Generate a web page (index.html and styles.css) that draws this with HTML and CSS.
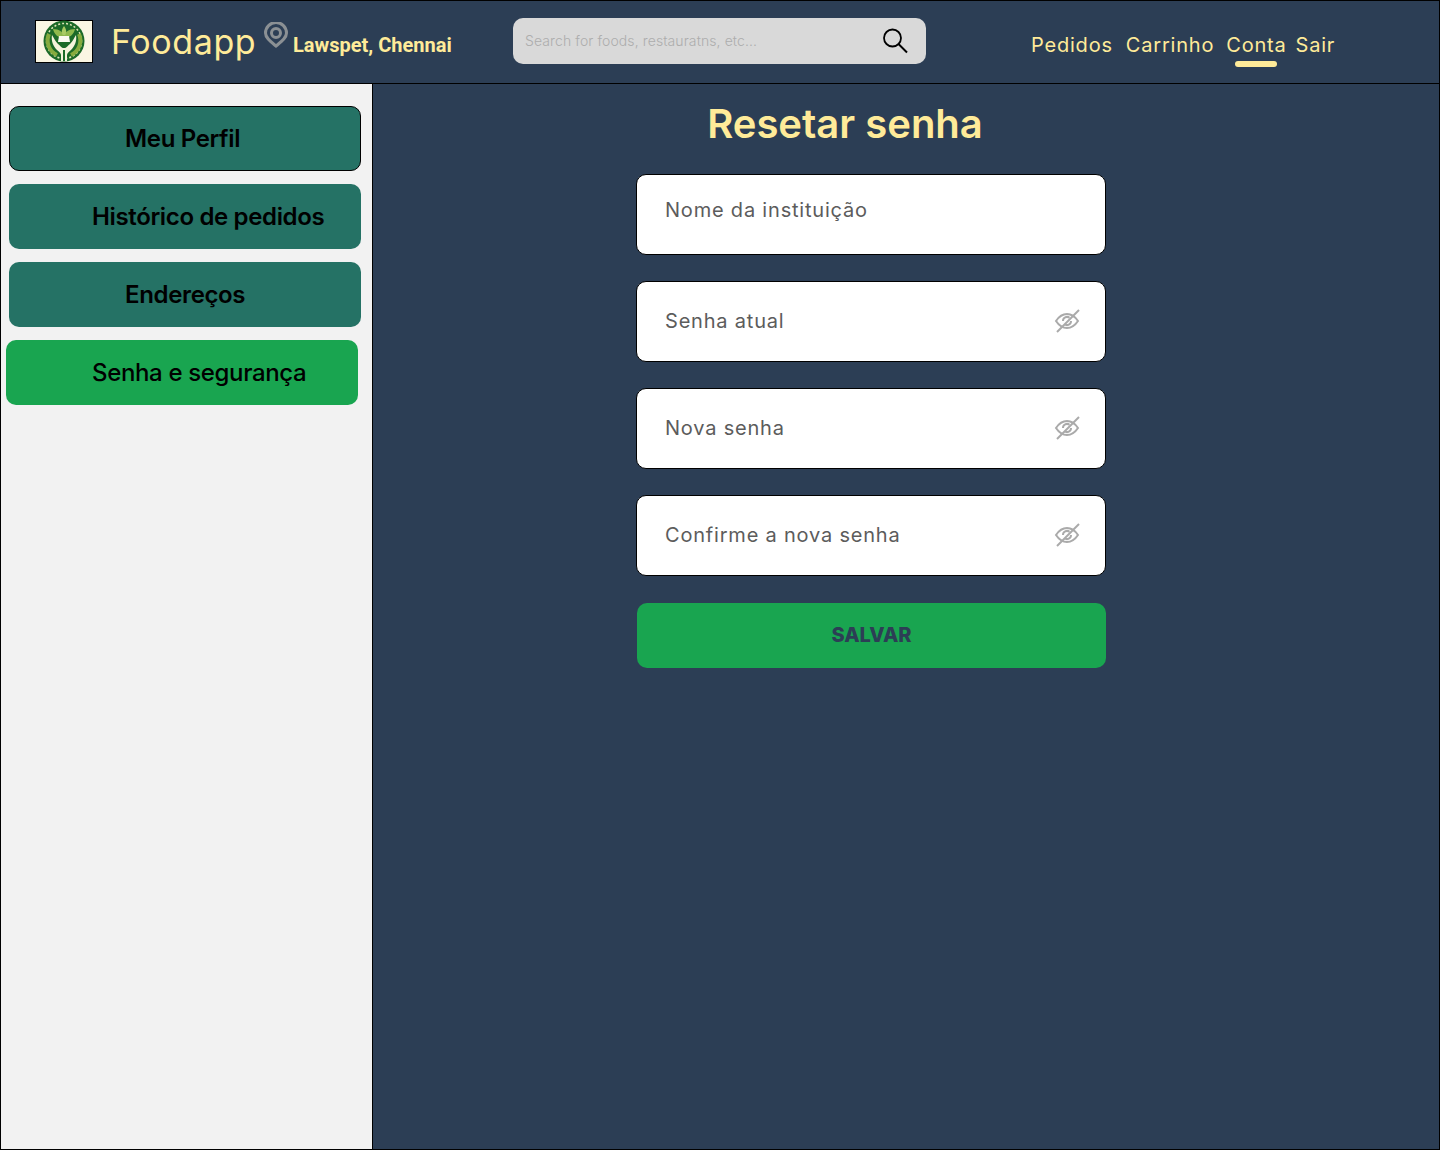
FILE: index.html
```html
<!DOCTYPE html>
<html lang="pt">

<head>
  <meta charset="utf-8">
  <title>Foodapp</title>
  <link rel="stylesheet" href="styles.css">
</head>

<body>
  <div class="page">
    <header class="topbar">
      <div class="logo">
        <svg width="42" height="42" viewBox="0 0 42 42">
          <circle cx="21" cy="21" r="20.500" fill="#1c6a28" />
          <circle cx="21" cy="21" r="17.500" fill="none" stroke="#dfe6b8" stroke-width="1.500" stroke-dasharray="2 2" />
          <path d="M6 14A16 16 0 0 0 14 35M36 14A16 16 0 0 1 28 35" fill="none" stroke="#86ab3e" stroke-width="4" />
          <path d="M21 18C15 18 11 14 10 9c6 0 11 3 11 9zM21 18c6 0 10-4 11-9-6 0-11 3-11 9z" fill="#8fb94c" />
          <path d="M21 16c-3-2-3-6 0-10 3 4 3 8 0 10z" fill="#a9cb63" />
          <path d="M16 16h10l1 6H15z" fill="#fbfaf0" />
          <path d="M9 15c-1 6 1 11 5 15 2 2 4 3 4 5v6h6v-6c0-2 2-3 4-5 4-4 6-9 5-15-2 3-3 6-6 9-3 2-3 4-6 4s-3-2-6-4c-3-3-4-6-6-9z" fill="#f5f3dc" />
          <path d="M20 30h2v11h-2z" fill="#1c6a28" />
        </svg>
      </div>
      <span class="brand">Foodapp</span>
      <svg class="pin" width="24" height="26" viewBox="0 0 24 26">
        <path d="M12 24C6.500 19.500 1.500 16 1.500 11a10.500 10.500 0 0 1 21 0c0 5-5 8.500-10.500 13z" fill="none" stroke="#8b9094" stroke-width="3" />
        <circle cx="12" cy="11" r="4.500" fill="none" stroke="#8b9094" stroke-width="3" />
      </svg>
      <span class="city">Lawspet, Chennai</span>
      <div class="search">
        <span class="search-text">Search for foods, restauratns, etc...</span>
        <svg width="28" height="28" viewBox="0 0 28 28">
          <circle cx="11.500" cy="11" r="8.500" fill="none" stroke="#000" stroke-width="1.800" />
          <path d="M17.500 17l8.500 8.500" stroke="#000" stroke-width="2" />
        </svg>
      </div>
      <nav class="menu">
        <a>Pedidos</a>
        <a>Carrinho</a>
        <a class="active">Conta</a>
        <a class="last">Sair</a>
      </nav>
    </header>

    <div class="content">
      <aside class="sidebar">
        <a class="side-item short outlined">Meu Perfil</a>
        <a class="side-item">Histórico de pedidos</a>
        <a class="side-item short">Endereços</a>
        <a class="side-item current">Senha e segurança</a>
      </aside>

      <main class="main">
        <h1 class="title">Resetar senha</h1>
        <form class="form">
          <div class="field field-top"><span>Nome da instituição</span></div>
          <div class="field"><span>Senha atual</span>
            <svg class="eye" width="26" height="24" viewBox="0 0 26 24">
              <path d="M2 12c3-4.500 7-7 11-7s8 2.500 11 7c-3 4.500-7 7-11 7s-8-2.500-11-7z" fill="none" stroke="#aaa" stroke-width="2" />
              <path d="M9 12a4 4 0 0 1 6.500-3.200M17 12a4 4 0 0 1-6.500 3.200" fill="none" stroke="#aaa" stroke-width="2" />
              <path d="M3 23L25 1" stroke="#aaa" stroke-width="2" />
            </svg>
          </div>
          <div class="field"><span>Nova senha</span>
            <svg class="eye" width="26" height="24" viewBox="0 0 26 24">
              <path d="M2 12c3-4.500 7-7 11-7s8 2.500 11 7c-3 4.500-7 7-11 7s-8-2.500-11-7z" fill="none" stroke="#aaa" stroke-width="2" />
              <path d="M9 12a4 4 0 0 1 6.500-3.200M17 12a4 4 0 0 1-6.500 3.200" fill="none" stroke="#aaa" stroke-width="2" />
              <path d="M3 23L25 1" stroke="#aaa" stroke-width="2" />
            </svg>
          </div>
          <div class="field"><span>Confirme a nova senha</span>
            <svg class="eye" width="26" height="24" viewBox="0 0 26 24">
              <path d="M2 12c3-4.500 7-7 11-7s8 2.500 11 7c-3 4.500-7 7-11 7s-8-2.500-11-7z" fill="none" stroke="#aaa" stroke-width="2" />
              <path d="M9 12a4 4 0 0 1 6.500-3.200M17 12a4 4 0 0 1-6.500 3.200" fill="none" stroke="#aaa" stroke-width="2" />
              <path d="M3 23L25 1" stroke="#aaa" stroke-width="2" />
            </svg>
          </div>
          <div class="save">SALVAR</div>
        </form>
      </main>
    </div>
  </div>
</body>

</html>
```

FILE: styles.css
```css
* {
  box-sizing: border-box;
}

body {
  margin: 0;
  font-family: "Inter", sans-serif;
  background-color: #2c3e55;
}

.page {
  display: flex;
  flex-direction: column;
  height: 1150px;
  border: 1px solid #000;
  background-color: #2c3e55;
}

/* top bar */
.topbar {
  display: flex;
  align-items: center;
  height: 83px;
  padding-left: 34px;
  border-bottom: 1px solid #000;
  color: #ffeb99;
  flex-shrink: 0;
}

.logo {
  display: flex;
  align-items: flex-end;
  justify-content: center;
  width: 58px;
  height: 43px;
  margin-top: -1px;
  background-color: #faf6e3;
  border: 1px solid #000;
}

.brand {
  margin-left: 18px;
  width: 153px;
  font-family: "Inter", sans-serif;
  font-size: 34px;
  line-height: 40px;
  letter-spacing: 0.6px;
}

.pin {
  align-self: flex-start;
  margin-top: 21px;
}

.city {
  margin-left: 5px;
  margin-top: 6px;
  width: 220px;
  font-family: "Roboto", sans-serif;
  font-size: 20px;
  font-weight: 700;
}

.search {
  display: flex;
  align-items: center;
  justify-content: space-between;
  width: 413px;
  height: 46px;
  padding: 0 17px 0 12px;
  margin-top: -3px;
  background-color: #d9d9d9;
  border-radius: 10px;
}

.search-text {
  font-family: "Inter", sans-serif;
  font-size: 14px;
  font-weight: 300;
  letter-spacing: 0.1px;
  color: #adadad;
}

.menu {
  display: flex;
  margin-left: 105px;
  margin-top: 5px;
  gap: 13px;
  font-family: "Inter", sans-serif;
  font-size: 20px;
  line-height: 28px;
  letter-spacing: 0.8px;
}

.menu a {
  position: relative;
}

.menu .active {
  margin-left: -1px;
}

.menu .last {
  margin-left: -4px;
}

.menu .active::after {
  content: "";
  position: absolute;
  left: 9px;
  top: 30px;
  width: 42px;
  height: 6px;
  background-color: #ffeb99;
  border-radius: 3px;
}

/* sidebar + main */
.content {
  display: flex;
  flex: 1;
}

.sidebar {
  display: flex;
  flex-direction: column;
  gap: 13px;
  width: 372px;
  padding: 22px 0 0 8px;
  background-color: #f2f2f2;
  border-right: 1px solid #000;
}

.side-item {
  display: flex;
  align-items: center;
  width: 352px;
  height: 65px;
  padding-left: 83px;
  background-color: #257265;
  border-radius: 10px;
  color: #000;
  font-size: 24px;
  font-weight: 600;
  letter-spacing: -0.35px;
}

.short {
  padding-left: 116px;
}

.outlined {
  border: 1px solid #000;
  padding-left: 115px;
}

.current {
  margin-left: -3px;
  padding-left: 86px;
  background-color: #19a550;
  font-weight: 500;
}

.main {
  flex: 1;
}

.title {
  width: 944px;
  margin: 15px 0 0;
  font-size: 40px;
  line-height: 50px;
  font-weight: 600;
  text-align: center;
  color: #ffeb99;
}

.form {
  display: flex;
  flex-direction: column;
  gap: 26.5px;
  width: 469px;
  margin: 25px 0 0 264px;
}

.field {
  display: flex;
  align-items: center;
  justify-content: space-between;
  width: 470px;
  height: 80.5px;
  margin-left: -1px;
  padding: 0 25px 0 28px;
  background-color: #fff;
  border: 1px solid #000;
  border-radius: 10px;
  font-size: 20px;
  letter-spacing: 0.8px;
  color: #5c5c5c;
}

.field-top {
  padding-bottom: 9px;
}

.save {
  height: 65px;
  margin: 1px 0 0;
  line-height: 65px;
  text-align: center;
  background-color: #19a550;
  border-radius: 10px;
  font-size: 20px;
  font-weight: 800;
  color: #2c3e55;
}
```
